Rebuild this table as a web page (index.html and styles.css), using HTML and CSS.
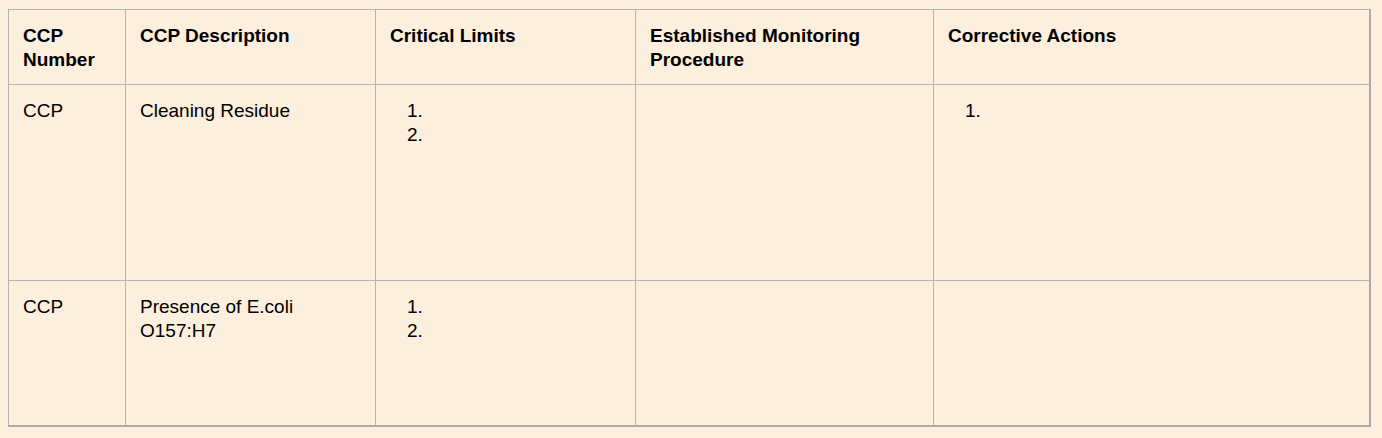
FILE: index.html
```html
<!DOCTYPE html>
<html>
<head>
<meta charset="utf-8">
<link rel="stylesheet" href="styles.css">
</head>
<body>
<table class="ccp-table">
  <colgroup>
    <col class="c1"><col class="c2"><col class="c3"><col class="c4"><col class="c5">
  </colgroup>
  <thead>
    <tr class="head-row">
      <th>CCP<br>Number</th>
      <th>CCP Description</th>
      <th>Critical Limits</th>
      <th>Established Monitoring Procedure</th>
      <th>Corrective Actions</th>
    </tr>
  </thead>
  <tbody>
    <tr class="row-a">
      <td>CCP</td>
      <td>Cleaning Residue</td>
      <td><ol class="num-list"><li></li><li></li></ol></td>
      <td></td>
      <td><ol class="num-list"><li></li></ol></td>
    </tr>
    <tr class="row-b">
      <td>CCP</td>
      <td>Presence of E.coli<br>O157:H7</td>
      <td><ol class="num-list"><li></li><li></li></ol></td>
      <td></td>
      <td></td>
    </tr>
  </tbody>
</table>
</body>
</html>
```
FILE: styles.css
```css
html, body {
  background: #fcefdd;
}
body {
  margin: 8px;
  font-family: "Liberation Sans", Arial, sans-serif;
  font-size: 19px;
  color: #000;
}
.ccp-table {
  border-collapse: collapse;
  table-layout: fixed;
  width: 1361px;
  margin-top: 1px;
  border-right: 2px solid #ababab;
  border-bottom: 2px solid #ababab;
}
.c1 { width: 117px; }
.c2 { width: 250px; }
.c3 { width: 260px; }
.c4 { width: 298px; }
.c5 { width: 436px; }
.ccp-table th,
.ccp-table td {
  border: 1px solid #b5b5b5;
  padding: 14px 14px;
  vertical-align: top;
  text-align: left;
  line-height: 24px;
}
.ccp-table th {
  font-weight: bold;
  padding-bottom: 12px;
}
.head-row { height: 75px; }
.row-a { height: 196px; }
.row-b { height: 145px; }
.num-list {
  margin: 0;
  padding-left: 38px;
}
.num-list li {
  height: 24px;
}
```
